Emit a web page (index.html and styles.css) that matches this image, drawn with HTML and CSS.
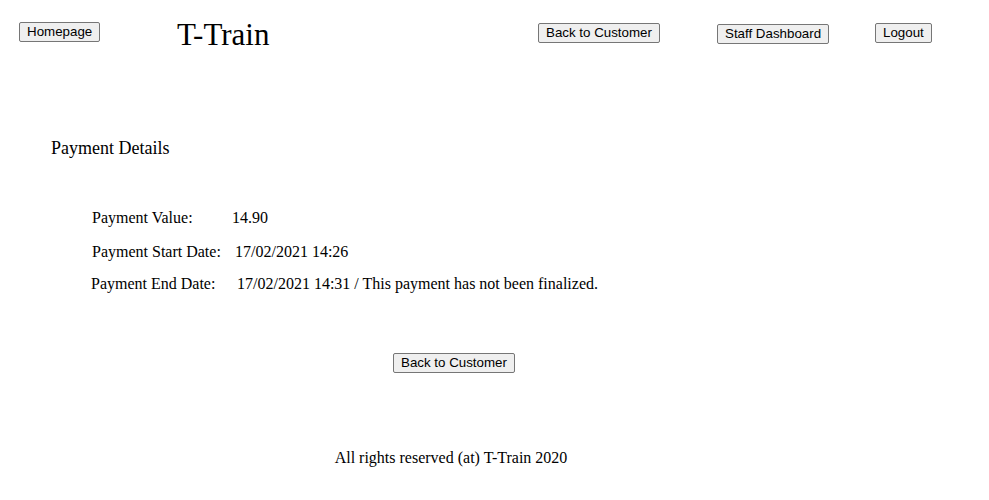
FILE: index.html
```html
<!DOCTYPE html>
<html>
<head>
<meta charset="utf-8">
<title>T-Train</title>
<link rel="stylesheet" href="styles.css">
</head>
<body>
<header class="topbar">
  <div class="cell cell-home"><button class="btn">Homepage</button></div>
  <div class="cell cell-title"><h1 class="brand">T-Train</h1></div>
  <div class="cell cell-back"><button class="btn">Back to Customer</button></div>
  <div class="cell cell-staff"><button class="btn">Staff Dashboard</button></div>
  <div class="cell cell-logout"><button class="btn">Logout</button></div>
</header>
<main class="content">
  <h2 class="section-title">Payment Details</h2>
  <div class="details">
    <div class="row row-value"><span class="label">Payment Value:</span><span class="value">14.90</span></div>
    <div class="row row-start"><span class="label">Payment Start Date:</span><span class="value">17/02/2021 14:26</span></div>
    <div class="row row-end"><span class="label">Payment End Date:</span><span class="value">17/02/2021 14:31 / This payment has not been finalized.</span></div>
  </div>
  <div class="actions"><button class="btn">Back to Customer</button></div>
</main>
<footer class="footer">All rights reserved (at) T-Train 2020</footer>
</body>
</html>
```
FILE: styles.css
```css
html, body {
  margin: 0;
  padding: 0;
  background: #fff;
  color: #000;
  font-family: "Liberation Serif", "Times New Roman", serif;
  font-size: 16px;
}

.btn {
  font-family: "Liberation Sans", Arial, sans-serif;
  font-size: 13.333px;
  line-height: 16px;
  color: #000;
  background: #efefef;
  border: 1px solid #767676;
  border-radius: 2px;
  padding: 1px 7px;
  margin: 0;
}

.topbar {
  display: grid;
  grid-template-columns: 158px 361px 179px 158px auto;
  padding-left: 19px;
  height: 70px;
}

.cell-home { padding-top: 22px; }
.cell-back { padding-top: 23px; }
.cell-staff { padding-top: 24px; }
.cell-logout { padding-top: 23px; }

.brand {
  margin: 0;
  padding-top: 17px;
  font-size: 31px;
  font-weight: normal;
  line-height: 36px;
}

.content {
  padding-top: 67px;
}

.section-title {
  margin: 0 0 0 51px;
  font-size: 18px;
  font-weight: normal;
  line-height: 22px;
}

.details {
  margin-top: 50px;
  display: flex;
  flex-direction: column;
}

.row {
  display: flex;
  height: 18px;
  line-height: 18px;
}

.row-value { padding-left: 92px; }
.row-start { padding-left: 92px; margin-top: 16px; }
.row-end { padding-left: 91px; margin-top: 14px; }

.row-value .label { width: 140px; }
.row-start .label { width: 143px; }
.row-end .label { width: 146px; }

.actions {
  margin-top: 60px;
  display: flex;
  margin-left: 393px;
}

.footer {
  margin-top: 76px;
  text-align: center;
  padding-right: 87px;
  line-height: 18px;
}
```
